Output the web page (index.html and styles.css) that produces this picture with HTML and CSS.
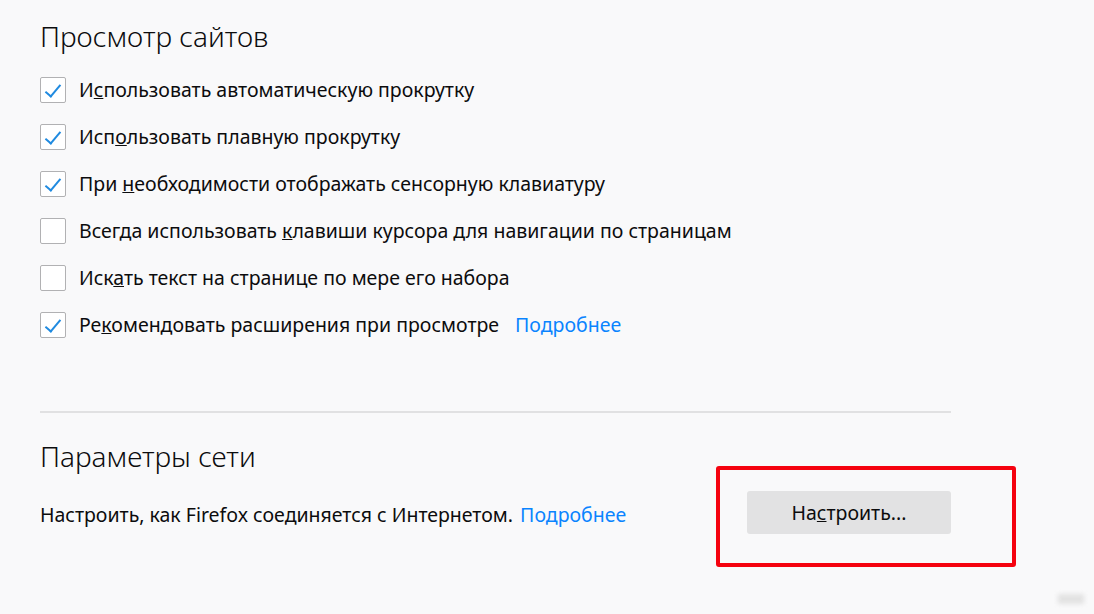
FILE: index.html
```html
<!DOCTYPE html>
<html lang="ru">
<head>
    <meta charset="UTF-8">
    <title>Настройки</title>
    <link rel="stylesheet" href="styles.css">
</head>
<body>
    <div class="prefs">
        <section class="group">
            <h2 class="group-title">Просмотр сайтов</h2>
            <ul class="options">
                <li class="option"><span class="box checked"></span><span>И<u>с</u>пользовать автоматическую прокрутку</span></li>
                <li class="option"><span class="box checked"></span><span>Исп<u>о</u>льзовать плавную прокрутку</span></li>
                <li class="option"><span class="box checked"></span><span>При <u>н</u>еобходимости отображать сенсорную клавиатуру</span></li>
                <li class="option"><span class="box"></span><span>Всегда использовать <u>к</u>лавиши курсора для навигации по страницам</span></li>
                <li class="option"><span class="box"></span><span>Иск<u>а</u>ть текст на странице по мере его набора</span></li>
                <li class="option"><span class="box checked"></span><span>Ре<u>к</u>омендовать расширения при просмотре</span><a class="more" href="#">Подробнее</a></li>
            </ul>
        </section>

        <hr class="divider">

        <section class="group">
            <h2 class="group-title">Параметры сети</h2>
            <div class="net-row">
                <p class="net-text">Настроить, как Firefox соединяется с Интернетом. <a class="more" href="#">Подробнее</a></p>
                <div class="btn-wrap">
                    <button class="btn">На<u>с</u>троить...</button>
                    <span class="highlight"></span>
                </div>
            </div>
        </section>
    </div>
    <span class="watermark"></span>
</body>
</html>
```

FILE: styles.css
```css
body {
    margin: 0;
    background: #f9f9fa;
    color: #0c0c0d;
    font-family: "Noto Sans", "Open Sans", sans-serif;
    font-size: 19.5px;
    height: 614px;
    overflow: hidden;
    position: relative;
}

.prefs {
    width: 911px;
    padding-left: 40px;
}

.group-title {
    margin: 16px 0 0;
    font-size: 28px;
    line-height: 40px;
    font-weight: 300;
    color: #0c0c0d;
}

.options {
    list-style: none;
    margin: 10px 0 0;
    padding: 0;
}

.option {
    display: flex;
    align-items: center;
    height: 47px;
}

.box {
    box-sizing: border-box;
    width: 26px;
    height: 26px;
    margin-right: 13px;
    border: 1px solid #b1b1b3;
    border-radius: 2px;
    background: #fff;
    position: relative;
}

.box.checked::after {
    content: "";
    position: absolute;
    left: 8px;
    top: 3px;
    width: 6px;
    height: 14px;
    border: solid #1f8ae0;
    border-width: 0 2px 2px 0;
    transform: rotate(40deg);
}

.more {
    color: #0a84ff;
    text-decoration: none;
    margin-left: 16px;
}

.net-text .more {
    margin-left: 2px;
}

.divider {
    margin: 63px 0 0;
    border: 0;
    border-top: 2px solid #e1e1e2;
}

.divider + .group .group-title {
    margin-top: 23px;
}

.net-row {
    display: flex;
    justify-content: space-between;
    align-items: center;
    margin-top: 15px;
}

.net-text {
    margin: 4px 0 0;
}

.btn-wrap {
    position: relative;
}

.btn {
    width: 204px;
    height: 43px;
    border: 0;
    border-radius: 3px;
    background: #e2e2e3;
    color: #0c0c0d;
    font-family: inherit;
    font-size: 19.5px;
}

.highlight {
    position: absolute;
    left: -31px;
    top: -25px;
    right: -65px;
    bottom: -33px;
    border: 4px solid #f5020f;
    border-radius: 3px;
}

.watermark {
    position: absolute;
    right: 10px;
    bottom: 10px;
    width: 26px;
    height: 10px;
    background: #e2e2e2;
    filter: blur(2px);
}
```
